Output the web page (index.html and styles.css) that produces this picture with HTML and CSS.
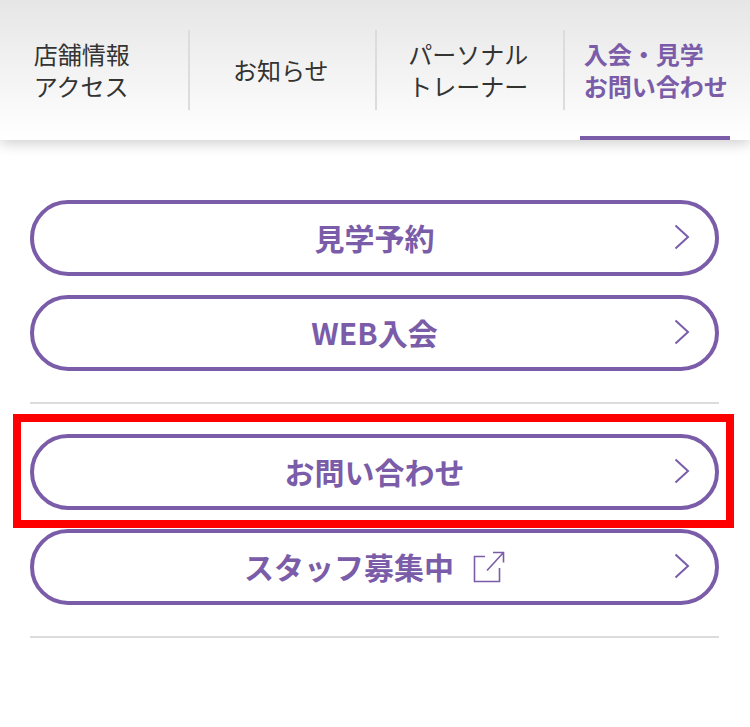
FILE: index.html
```html
<!DOCTYPE html>
<html lang="ja">
<head>
    <meta charset="UTF-8">
    <meta name="viewport" content="width=device-width, initial-scale=1.0">
    <title>入会・見学 お問い合わせ</title>
    <link rel="stylesheet" href="styles.css">
</head>
<body>
    <nav class="tabs">
        <a class="tab tab-first" href="#">店舗情報<br>アクセス</a>
        <a class="tab" href="#">お知らせ</a>
        <a class="tab" href="#">パーソナル<br>トレーナー</a>
        <a class="tab tab-active" href="#">入会・見学<br>お問い合わせ</a>
    </nav>

    <main class="content">
        <div class="group">
            <a class="pill" href="#">見学予約
                <svg class="chevron" viewBox="0 0 16 26"><path d="M1.5 1.5 L14 13 L1.5 24.5"/></svg>
            </a>
            <a class="pill" href="#">WEB入会
                <svg class="chevron" viewBox="0 0 16 26"><path d="M1.5 1.5 L14 13 L1.5 24.5"/></svg>
            </a>
        </div>

        <div class="group">
            <div class="highlight-wrap">
                <a class="pill" href="#">お問い合わせ
                    <svg class="chevron" viewBox="0 0 16 26"><path d="M1.5 1.5 L14 13 L1.5 24.5"/></svg>
                </a>
                <div class="highlight"></div>
            </div>
            <a class="pill" href="#">スタッフ募集中
                <!-- external link icon -->
                <svg class="external" viewBox="0 0 32 32"><path d="M12 5.5 H1.5 V30.5 H26.5 V17 M14 19.5 L30.5 1.5 M20 1.5 H30.5 V11.5"/></svg>
                <svg class="chevron" viewBox="0 0 16 26"><path d="M1.5 1.5 L14 13 L1.5 24.5"/></svg>
            </a>
        </div>
    </main>
</body>
</html>
```

FILE: styles.css
```css
body {
    margin: 0;
    background-color: #fff;
    color: #333;
    font-family: "Noto Sans CJK JP", "Noto Sans", sans-serif;
}
a {
    text-decoration: none;
    color: inherit;
}
.tabs {
    display: grid;
    grid-template-columns: repeat(4, 187.5px);
    height: 140px;
    background: linear-gradient(#e6e6e6, #fff);
    box-shadow: 0 4px 12px rgba(0, 0, 0, 0.18);
}
.tab {
    position: relative;
    display: flex;
    align-items: center;
    justify-content: center;
    height: 80px;
    margin-top: 30px;
    padding-right: 3px;
    font-size: 24px;
    line-height: 32px;
    color: #333;
    border-left: 2px solid #dcdcdc;
    box-sizing: border-box;
}
.tab-first {
    padding-right: 24px;
    border-left: none;
}
.tab-active {
    color: #7a5ca9;
    font-weight: 700;
}
/* underline of the current tab */
.tab-active::after {
    content: "";
    position: absolute;
    left: 15.5px;
    right: 20px;
    top: 106px;
    height: 4px;
    background-color: #7a5ca9;
}
.content {
    padding: 60px 31px 0 30px;
}
.group {
    display: flex;
    flex-direction: column;
    gap: 19px;
    padding-bottom: 31px;
    margin-bottom: 30px;
    border-bottom: 2px solid #dcdcdc;
}
.pill {
    position: relative;
    display: flex;
    align-items: center;
    justify-content: center;
    height: 76px;
    padding-bottom: 2px;
    box-sizing: border-box;
    border: 4px solid #7a5ca9;
    border-radius: 38px;
    font-size: 30px;
    font-weight: 700;
    color: #7a5ca9;
    background-color: #fff;
}
.chevron {
    position: absolute;
    right: 25px;
    top: 20px;
    width: 16px;
    height: 26px;
    fill: none;
    stroke: #7a5ca9;
    stroke-width: 2;
}
.external {
    width: 32px;
    height: 32px;
    margin-top: 2px;
    margin-left: 19px;
    fill: none;
    stroke: #7a5ca9;
    stroke-width: 1.6;
}
.highlight-wrap {
    position: relative;
}
/* red box drawn over the button */
.highlight {
    position: absolute;
    top: -20px;
    left: -17px;
    right: -15px;
    bottom: -18px;
    border: 8px solid #f00;
    pointer-events: none;
}
```
